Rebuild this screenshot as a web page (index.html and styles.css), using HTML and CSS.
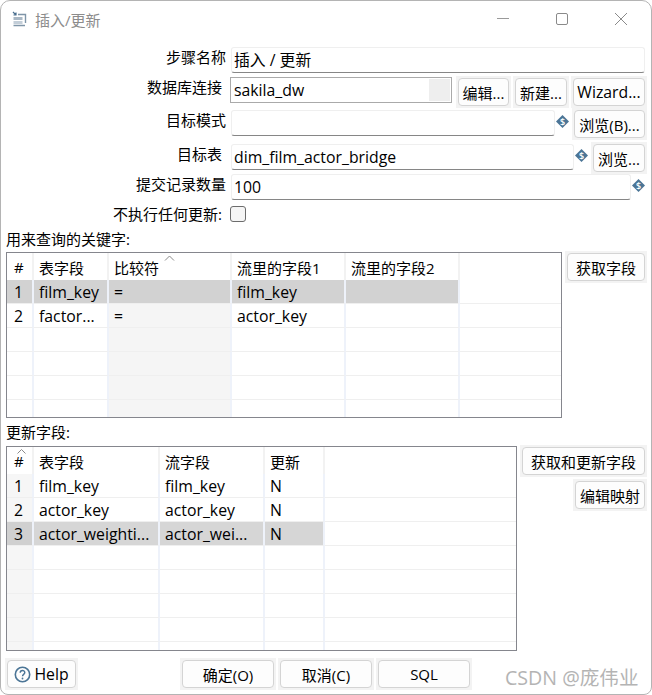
FILE: index.html
```html
<!DOCTYPE html>
<html lang="zh-CN">
<head>
  <meta charset="utf-8">
  <title>插入/更新</title>
  <link rel="stylesheet" href="styles.css">
</head>
<body>
  <div class="window">

    <!-- Title bar -->
    <div class="titlebar">
      <svg class="app-icon" width="16" height="16" viewBox="0 0 16 16" fill="none">
        <path d="M1 1 L4 4 M4 1.5 V4 H1.5" stroke="#4a6f8f" stroke-width="1.2"/>
        <path d="M6 3.5 H13.5 V12" stroke="#7f95a8" stroke-width="1.4"/>
        <rect x="1.5" y="6" width="9" height="3" fill="#a9b7c4"/>
        <rect x="1.5" y="10" width="9" height="3" fill="#c3ced8"/>
        <path d="M1.5 14.5 H13" stroke="#7f95a8" stroke-width="1.4"/>
      </svg>
      <span class="title">插入/更新</span>
      <div class="win-buttons">
        <svg width="14" height="14" viewBox="0 0 14 14"><path d="M1 6.5 H13" stroke="#9a9a9a" stroke-width="1"/></svg>
        <svg width="14" height="14" viewBox="0 0 14 14" fill="none"><rect x="1.5" y="1.5" width="11" height="11" rx="1.5" stroke="#8a8a8a"/></svg>
        <svg width="14" height="14" viewBox="0 0 14 14"><path d="M1 1 L13 13 M13 1 L1 13" stroke="#8a8a8a" stroke-width="1"/></svg>
      </div>
    </div>

    <!-- Step settings -->
    <div class="form">
      <div class="row row-name">
        <label class="lbl">步骤名称</label>
        <div class="input">插入 / 更新</div>
      </div>
      <div class="row row-conn">
        <label class="lbl lbl-short">数据库连接</label>
        <div class="input combo">sakila_dw<span class="combo-arrow"></span></div>
        <button class="btn btn-edit">编辑...</button>
        <button class="btn btn-new">新建...</button>
        <button class="btn btn-wizard">Wizard...</button>
      </div>
      <div class="row row-schema">
        <label class="lbl">目标模式</label>
        <div class="input"></div>
        <svg class="var-icon" width="13" height="13" viewBox="0 0 13 13"><path d="M6.5 0 L13 6.5 L6.5 13 L0 6.5 Z" fill="#4b7596"/><text x="6.5" y="9.5" class="var-s">$</text></svg>
        <button class="btn btn-browse1">浏览(B)...</button>
      </div>
      <div class="row row-table">
        <label class="lbl lbl-short">目标表</label>
        <div class="input">dim_film_actor_bridge</div>
        <svg class="var-icon" width="13" height="13" viewBox="0 0 13 13"><path d="M6.5 0 L13 6.5 L6.5 13 L0 6.5 Z" fill="#4b7596"/><text x="6.5" y="9.5" class="var-s">$</text></svg>
        <button class="btn btn-browse2">浏览...</button>
      </div>
      <div class="row row-commit">
        <label class="lbl">提交记录数量</label>
        <div class="input">100</div>
        <svg class="var-icon" width="13" height="13" viewBox="0 0 13 13"><path d="M6.5 0 L13 6.5 L6.5 13 L0 6.5 Z" fill="#4b7596"/><text x="6.5" y="9.5" class="var-s">$</text></svg>
      </div>
      <div class="row row-check">
        <label class="lbl lbl-short">不执行任何更新:</label>
        <span class="check"></span>
      </div>
    </div>

    <!-- Key lookup table -->
    <div class="section-label key-label">用来查询的关键字:</div>
    <div class="table-row key-row">
      <div class="grid-box key-box">
        <svg class="sort sort-key" width="11" height="6" viewBox="0 0 11 6" fill="none"><path d="M1 5.5 L5.5 1 L10 5.5" stroke="#8a8a8a"/></svg>
        <table class="grid">
          <colgroup>
            <col class="c-27"><col class="c-75"><col class="c-123"><col class="c-114"><col class="c-114"><col>
          </colgroup>
          <thead>
            <tr><th class="num">#</th><th>表字段</th><th>比较符</th><th>流里的字段1</th><th>流里的字段2</th><th class="fill"></th></tr>
          </thead>
          <tbody>
            <tr class="sel"><td class="num">1</td><td>film_key</td><td>=</td><td>film_key</td><td></td><td class="fill"></td></tr>
            <tr><td class="num">2</td><td>factor...</td><td class="ro">=</td><td>actor_key</td><td></td><td class="fill"></td></tr>
            <tr><td class="num"></td><td></td><td class="ro"></td><td></td><td></td><td class="fill"></td></tr>
            <tr><td class="num"></td><td></td><td class="ro"></td><td></td><td></td><td class="fill"></td></tr>
            <tr><td class="num"></td><td></td><td class="ro"></td><td></td><td></td><td class="fill"></td></tr>
            <tr><td class="num"></td><td></td><td class="ro"></td><td></td><td></td><td class="fill"></td></tr>
          </tbody>
        </table>
      </div>
      <div class="side-buttons">
        <button class="btn btn-getkey">获取字段</button>
      </div>
    </div>

    <!-- Update fields table -->
    <div class="section-label upd-label">更新字段:</div>
    <div class="table-row upd-row">
      <div class="grid-box upd-box">
        <svg class="sort sort-upd" width="9" height="5" viewBox="0 0 9 5" fill="none"><path d="M0.5 4.5 L4.5 0.5 L8.5 4.5" stroke="#8a8a8a"/></svg>
        <table class="grid">
          <colgroup>
            <col class="c-27"><col class="c-126"><col class="c-105"><col class="c-60"><col>
          </colgroup>
          <thead>
            <tr><th class="num">#</th><th>表字段</th><th>流字段</th><th>更新</th><th class="fill"></th></tr>
          </thead>
          <tbody>
            <tr><td class="num">1</td><td>film_key</td><td>film_key</td><td>N</td><td class="fill"></td></tr>
            <tr><td class="num">2</td><td>actor_key</td><td>actor_key</td><td>N</td><td class="fill"></td></tr>
            <tr class="sel"><td class="num">3</td><td>actor_weighti...</td><td>actor_wei...</td><td>N</td><td class="fill"></td></tr>
            <tr><td class="num"></td><td></td><td></td><td></td><td class="fill"></td></tr>
            <tr><td class="num"></td><td></td><td></td><td></td><td class="fill"></td></tr>
            <tr><td class="num"></td><td></td><td></td><td></td><td class="fill"></td></tr>
            <tr><td class="num"></td><td></td><td></td><td></td><td class="fill"></td></tr>
            <tr><td class="num"></td><td></td><td></td><td></td><td class="fill"></td></tr>
          </tbody>
        </table>
      </div>
      <div class="side-buttons">
        <button class="btn btn-getupd">获取和更新字段</button>
        <button class="btn btn-map">编辑映射</button>
      </div>
    </div>

    <!-- Bottom buttons -->
    <div class="footer">
      <button class="btn btn-help">
        <svg width="17" height="17" viewBox="0 0 17 17" fill="none"><circle cx="8.5" cy="8.5" r="7.2" stroke="#4b7596" stroke-width="1.6"/><path d="M6.2 6.8 C6.2 3.8 10.8 3.8 10.8 6.6 C10.8 8.4 8.5 8.4 8.5 10.2" stroke="#4b7596" stroke-width="1.4"/><circle cx="8.5" cy="12.5" r="0.9" fill="#4b7596"/></svg>
        Help
      </button>
      <div class="footer-main">
        <button class="btn btn-foot">确定(O)</button>
        <button class="btn btn-foot">取消(C)</button>
        <button class="btn btn-foot">SQL</button>
      </div>
    </div>

    <div class="watermark">CSDN @庞伟业</div>
  </div>
</body>
</html>
```
FILE: styles.css
```css
* {
  box-sizing: border-box;
}
html, body {
  margin: 0;
  height: 100%;
  background: #fff;
}
body {
  font-family: "Open Sans", "Noto Sans CJK SC", sans-serif;
  font-size: 15px;
  color: #000;
}
.window {
  position: relative;
  height: 695px;
  border: 1px solid #b4b4b4;
  border-top-left-radius: 10px;
  border-top-right-radius: 10px;
  border-bottom-left-radius: 8px;
  border-bottom-right-radius: 8px;
  background: #fff;
  overflow: hidden;
}

/* title bar */
.titlebar {
  display: flex;
  align-items: center;
  height: 46px;
  padding: 0 23px 10px 11px;
}
.app-icon {
  margin-right: 7px;
}
.title {
  font-size: 15px;
  color: #8c8c8c;
}
.win-buttons {
  display: flex;
  gap: 45px;
  margin-left: auto;
}

/* form rows */
.form {
  display: flex;
  flex-direction: column;
}
.row {
  display: flex;
  align-items: flex-start;
  padding-right: 6px;
}
.lbl {
  width: 225px;
  text-align: right;
  white-space: nowrap;
  line-height: 20px;
  flex: none;
}
.lbl-short {
  padding-right: 4px;
}
.input {
  height: 26px;
  flex: 1;
  margin-left: 5px;
  padding: 0 2px;
  font-size: 15.8px;
  line-height: 24px;
  border: 1px solid #efefef;
  border-bottom: 1px solid #868686;
  border-radius: 3px;
  background: #fff;
  white-space: nowrap;
}
.row-name { height: 30px; }
.row-conn { height: 33px; }
.row-schema { height: 34px; }
.row-table { height: 30px; }
.row-commit { height: 30px; }
.row-check { height: 26px; }
.row-conn .combo {
  flex: none;
  width: 222px;
  margin-left: 4px;
  padding: 0 3px;
  position: relative;
  border: 1px solid #aaa;
  border-radius: 0;
}
.combo-arrow {
  position: absolute;
  top: 1px;
  right: 1px;
  width: 21px;
  height: 22px;
  background: #eee;
}
.var-icon {
  flex: none;
  margin: 5px 5px 0 1px;
}
.row-commit .var-icon {
  margin-right: 0;
}
.check {
  width: 16px;
  height: 16px;
  margin: 2px 0 0 4px;
  border: 1px solid #6c6c6c;
  border-radius: 3px;
  background: #f5f5f5;
}
.var-s {
  font-family: "Open Sans", sans-serif;
  font-size: 9px;
  font-weight: 600;
  fill: #fff;
  text-anchor: middle;
}

/* buttons: square light halo behind a rounded face */
.btn {
  position: relative;
  isolation: isolate;
  height: 28px;
  padding: 0;
  font: inherit;
  color: #000;
  border: none;
  background: transparent;
  white-space: nowrap;
  flex: none;
}
.btn::before {
  content: "";
  position: absolute;
  inset: -2px;
  z-index: -2;
  background: #f3f3f3;
}
.btn::after {
  content: "";
  position: absolute;
  inset: 0;
  z-index: -1;
  border: 1px solid #d4d4d4;
  border-radius: 4px;
  background: #fdfdfd;
}
.row-conn .btn {
  margin-top: 1px;
}
.btn-edit { width: 51px; margin-left: 6px; }
.btn-new { width: 52px; margin-left: 6px; }
.btn-wizard { width: 72px; margin-left: 6px; font-size: 15.8px; }
.btn-browse1 { width: 71px; }
.btn-browse2 { width: 52px; }

/* tables */
.section-label {
  padding-left: 5px;
  line-height: 18px;
}
.key-label { height: 22px; }
.upd-label { height: 23px; margin-top: 5px; }
.table-row {
  display: flex;
  padding: 0 6px 0 5px;
}
.grid-box {
  position: relative;
  border: 1px solid #85868d;
  overflow: hidden;
  flex: none;
  background: #fff;
}
.key-box { width: 556px; height: 166px; }
.upd-box { width: 511px; height: 205px; }
.side-buttons {
  display: flex;
  flex-direction: column;
  align-items: flex-end;
  gap: 6px;
  flex: 1;
  padding-top: 1px;
}
.btn-getkey { width: 78px; }
.btn-getupd { width: 123px; }
.btn-map { width: 70px; }
.grid {
  width: 100%;
  border-collapse: separate;
  border-spacing: 0;
  table-layout: fixed;
}
.c-27 { width: 27px; }
.c-60 { width: 60px; }
.c-75 { width: 75px; }
.c-105 { width: 105px; }
.c-114 { width: 114px; }
.c-123 { width: 123px; }
.c-126 { width: 126px; }
.grid th, .grid td {
  padding: 0 0 0 5px;
  height: 24px;
  font-weight: normal;
  text-align: left;
  white-space: nowrap;
  overflow: hidden;
  border-right: 2px solid #eef2fa;
  border-bottom: 1px solid #efefef;
}
.grid td {
  font-size: 15.8px;
}
.grid th {
  height: 27px;
  border-right: 2px solid #f2f2f2;
  border-bottom: none;
  padding-top: 1px;
}
.grid .num {
  padding-left: 7px;
}
.grid .fill {
  border-right: none;
}
.grid .ro {
  background: #f5f5f5;
}
.upd-box td.num {
  background: #f6f6f6;
}
.grid .sel td {
  background: #d2d2d2;
}
.upd-box .sel td {
  background: #d6d6d6;
}
.upd-box .sel td.num {
  background: #d0d0d0;
}
.grid .sel .fill {
  background: #fff;
}
.sort {
  position: absolute;
  top: 2px;
}
.sort-key { left: 157px; }
.sort-upd { left: 10px; }

/* footer */
.footer {
  display: flex;
  margin-top: 9px;
  padding-left: 6px;
}
.btn-help {
  display: flex;
  align-items: center;
  justify-content: center;
  gap: 3px;
  width: 69px;
  font-size: 15.8px;
}
.footer-main {
  display: flex;
  gap: 6px;
  margin-left: 106px;
}
.btn-foot {
  width: 92px;
}
.watermark {
  position: absolute;
  left: 504px;
  top: 661px;
  font-size: 19.6px;
  color: #b4b4b4;
  white-space: nowrap;
}
```
